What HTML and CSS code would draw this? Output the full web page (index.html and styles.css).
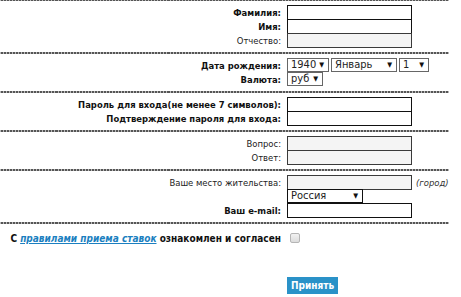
FILE: index.html
```html
<!DOCTYPE html>
<html lang="ru">
<head>
    <meta charset="UTF-8">
    <meta name="viewport" content="width=device-width, initial-scale=1.0">
    <title>Регистрация</title>
    <link rel="stylesheet" href="styles.css">
</head>
<body>
    <form class="reg-form">
        <!-- ФИО -->
        <div class="section">
            <div class="row">
                <label class="label req" for="lastName">Фамилия:</label>
                <div class="field"><input class="text req" type="text" id="lastName"></div>
            </div>
            <div class="row">
                <label class="label req" for="firstName">Имя:</label>
                <div class="field"><input class="text req" type="text" id="firstName"></div>
            </div>
            <div class="row">
                <label class="label" for="middleName">Отчество:</label>
                <div class="field"><input class="text" type="text" id="middleName"></div>
            </div>
        </div>

        <!-- Дата рождения, валюта -->
        <div class="section">
            <div class="row">
                <label class="label req">Дата рождения:</label>
                <div class="field">
                    <span class="select year"><select><option>1940</option></select></span>
                    <span class="select month"><select><option>Январь</option></select></span>
                    <span class="select day"><select><option>1</option></select></span>
                </div>
            </div>
            <div class="row">
                <label class="label req">Валюта:</label>
                <div class="field">
                    <span class="select currency"><select><option>руб</option></select></span>
                </div>
            </div>
        </div>

        <!-- Пароль -->
        <div class="section">
            <div class="row">
                <label class="label req" for="pass">Пароль для входа(не менее 7 символов):</label>
                <div class="field"><input class="text req" type="password" id="pass"></div>
            </div>
            <div class="row">
                <label class="label req" for="pass2">Подтверждение пароля для входа:</label>
                <div class="field"><input class="text req" type="password" id="pass2"></div>
            </div>
        </div>

        <!-- Вопрос -->
        <div class="section">
            <div class="row">
                <label class="label" for="question">Вопрос:</label>
                <div class="field"><input class="text" type="text" id="question"></div>
            </div>
            <div class="row">
                <label class="label" for="answer">Ответ:</label>
                <div class="field"><input class="text" type="text" id="answer"></div>
            </div>
        </div>

        <!-- Место жительства, почта -->
        <div class="section">
            <div class="row">
                <label class="label" for="city">Ваше место жительства:</label>
                <div class="field">
                    <input class="text" type="text" id="city">
                    <span class="hint">(город)</span>
                </div>
            </div>
            <div class="row">
                <span class="label"></span>
                <div class="field">
                    <span class="select country"><select><option>Россия</option></select></span>
                </div>
            </div>
            <div class="row">
                <label class="label req" for="email">Ваш e-mail:</label>
                <div class="field"><input class="text req" type="text" id="email"></div>
            </div>
        </div>

        <div class="section last">
            <div class="row">
                <label class="label req agree" for="agree">С <a href="#">правилами приема ставок</a> ознакомлен и согласен</label>
                <div class="field"><input class="check" type="checkbox" id="agree"></div>
            </div>
            <div class="row submit-row">
                <span class="label"></span>
                <div class="field"><button type="button" class="btn">Принять</button></div>
            </div>
        </div>
    </form>
</body>
</html>
```

FILE: styles.css
```css
body {
    margin: 0;
    padding: 0;
    background: #fff;
    font-family: "DejaVu Sans Condensed", "DejaVu Sans", sans-serif;
    font-size: 9.4px;
    color: #222;
}

.reg-form {
    width: 449px;
    margin-top: -1px;
}

.section {
    border-top: 2px solid #888;
    border-image: repeating-linear-gradient(90deg, #555 0 2px, #b8b8b8 2px 3px) 2;
    padding: 4px 0 5px;
}

.section.last {
    padding-top: 7px;
}

.row {
    display: grid;
    grid-template-columns: 283px 1fr;
    column-gap: 4px;
    height: 14px;
    align-items: center;
}

.label {
    text-align: right;
    padding-right: 2px;
    white-space: nowrap;
    color: #222;
}

.label.req {
    font-weight: bold;
    color: #111;
}

.label.agree {
    font-size: 10px;
}

.label a {
    color: #1b7fc0;
    font-style: italic;
    text-decoration: underline;
}

.field {
    display: flex;
    align-items: center;
    gap: 2px;
    height: 14px;
}

.text {
    box-sizing: border-box;
    width: 125px;
    height: 15px;
    margin: 0;
    padding: 0 2px;
    border: 1px solid #3a3a3a;
    background: #f4f4f4;
    font: inherit;
}

.text.req {
    border-color: #111;
    background: #fff;
}

.hint {
    margin-left: 2px;
    font-style: italic;
    color: #333;
}

.select {
    position: relative;
    display: inline-block;
    height: 14px;
}

.select select {
    box-sizing: border-box;
    appearance: none;
    width: 100%;
    height: 14px;
    margin: 0;
    padding: 0 0 0 3px;
    border: 1px solid #666;
    border-radius: 0;
    background: #fff;
    font: inherit;
    font-size: 11px;
    line-height: 12px;
    color: #222;
}

.select::after {
    content: "▼";
    position: absolute;
    right: 5px;
    top: 3px;
    font-size: 7px;
    color: #111;
    pointer-events: none;
}

.select.year { width: 42px; }
.select.month { width: 66px; }
.select.day { width: 30px; }
.select.currency { width: 36px; }
.select.country { width: 76px; }

.select.country select {
    border-color: #111;
}

.check {
    appearance: none;
    box-sizing: border-box;
    width: 10px;
    height: 10px;
    margin: 0 0 0 3px;
    border: 1px solid #b5b5b5;
    border-radius: 2px;
    background: linear-gradient(#f2f2f2, #dcdcdc);
}

.submit-row {
    margin-top: 32px;
    height: 17px;
}

.submit-row .field {
    height: 17px;
}

.btn {
    height: 17px;
    padding: 0 4px;
    border: none;
    background: #2a92c8;
    color: #fff;
    font: inherit;
    font-size: 10px;
    font-weight: bold;
    cursor: pointer;
}
```
